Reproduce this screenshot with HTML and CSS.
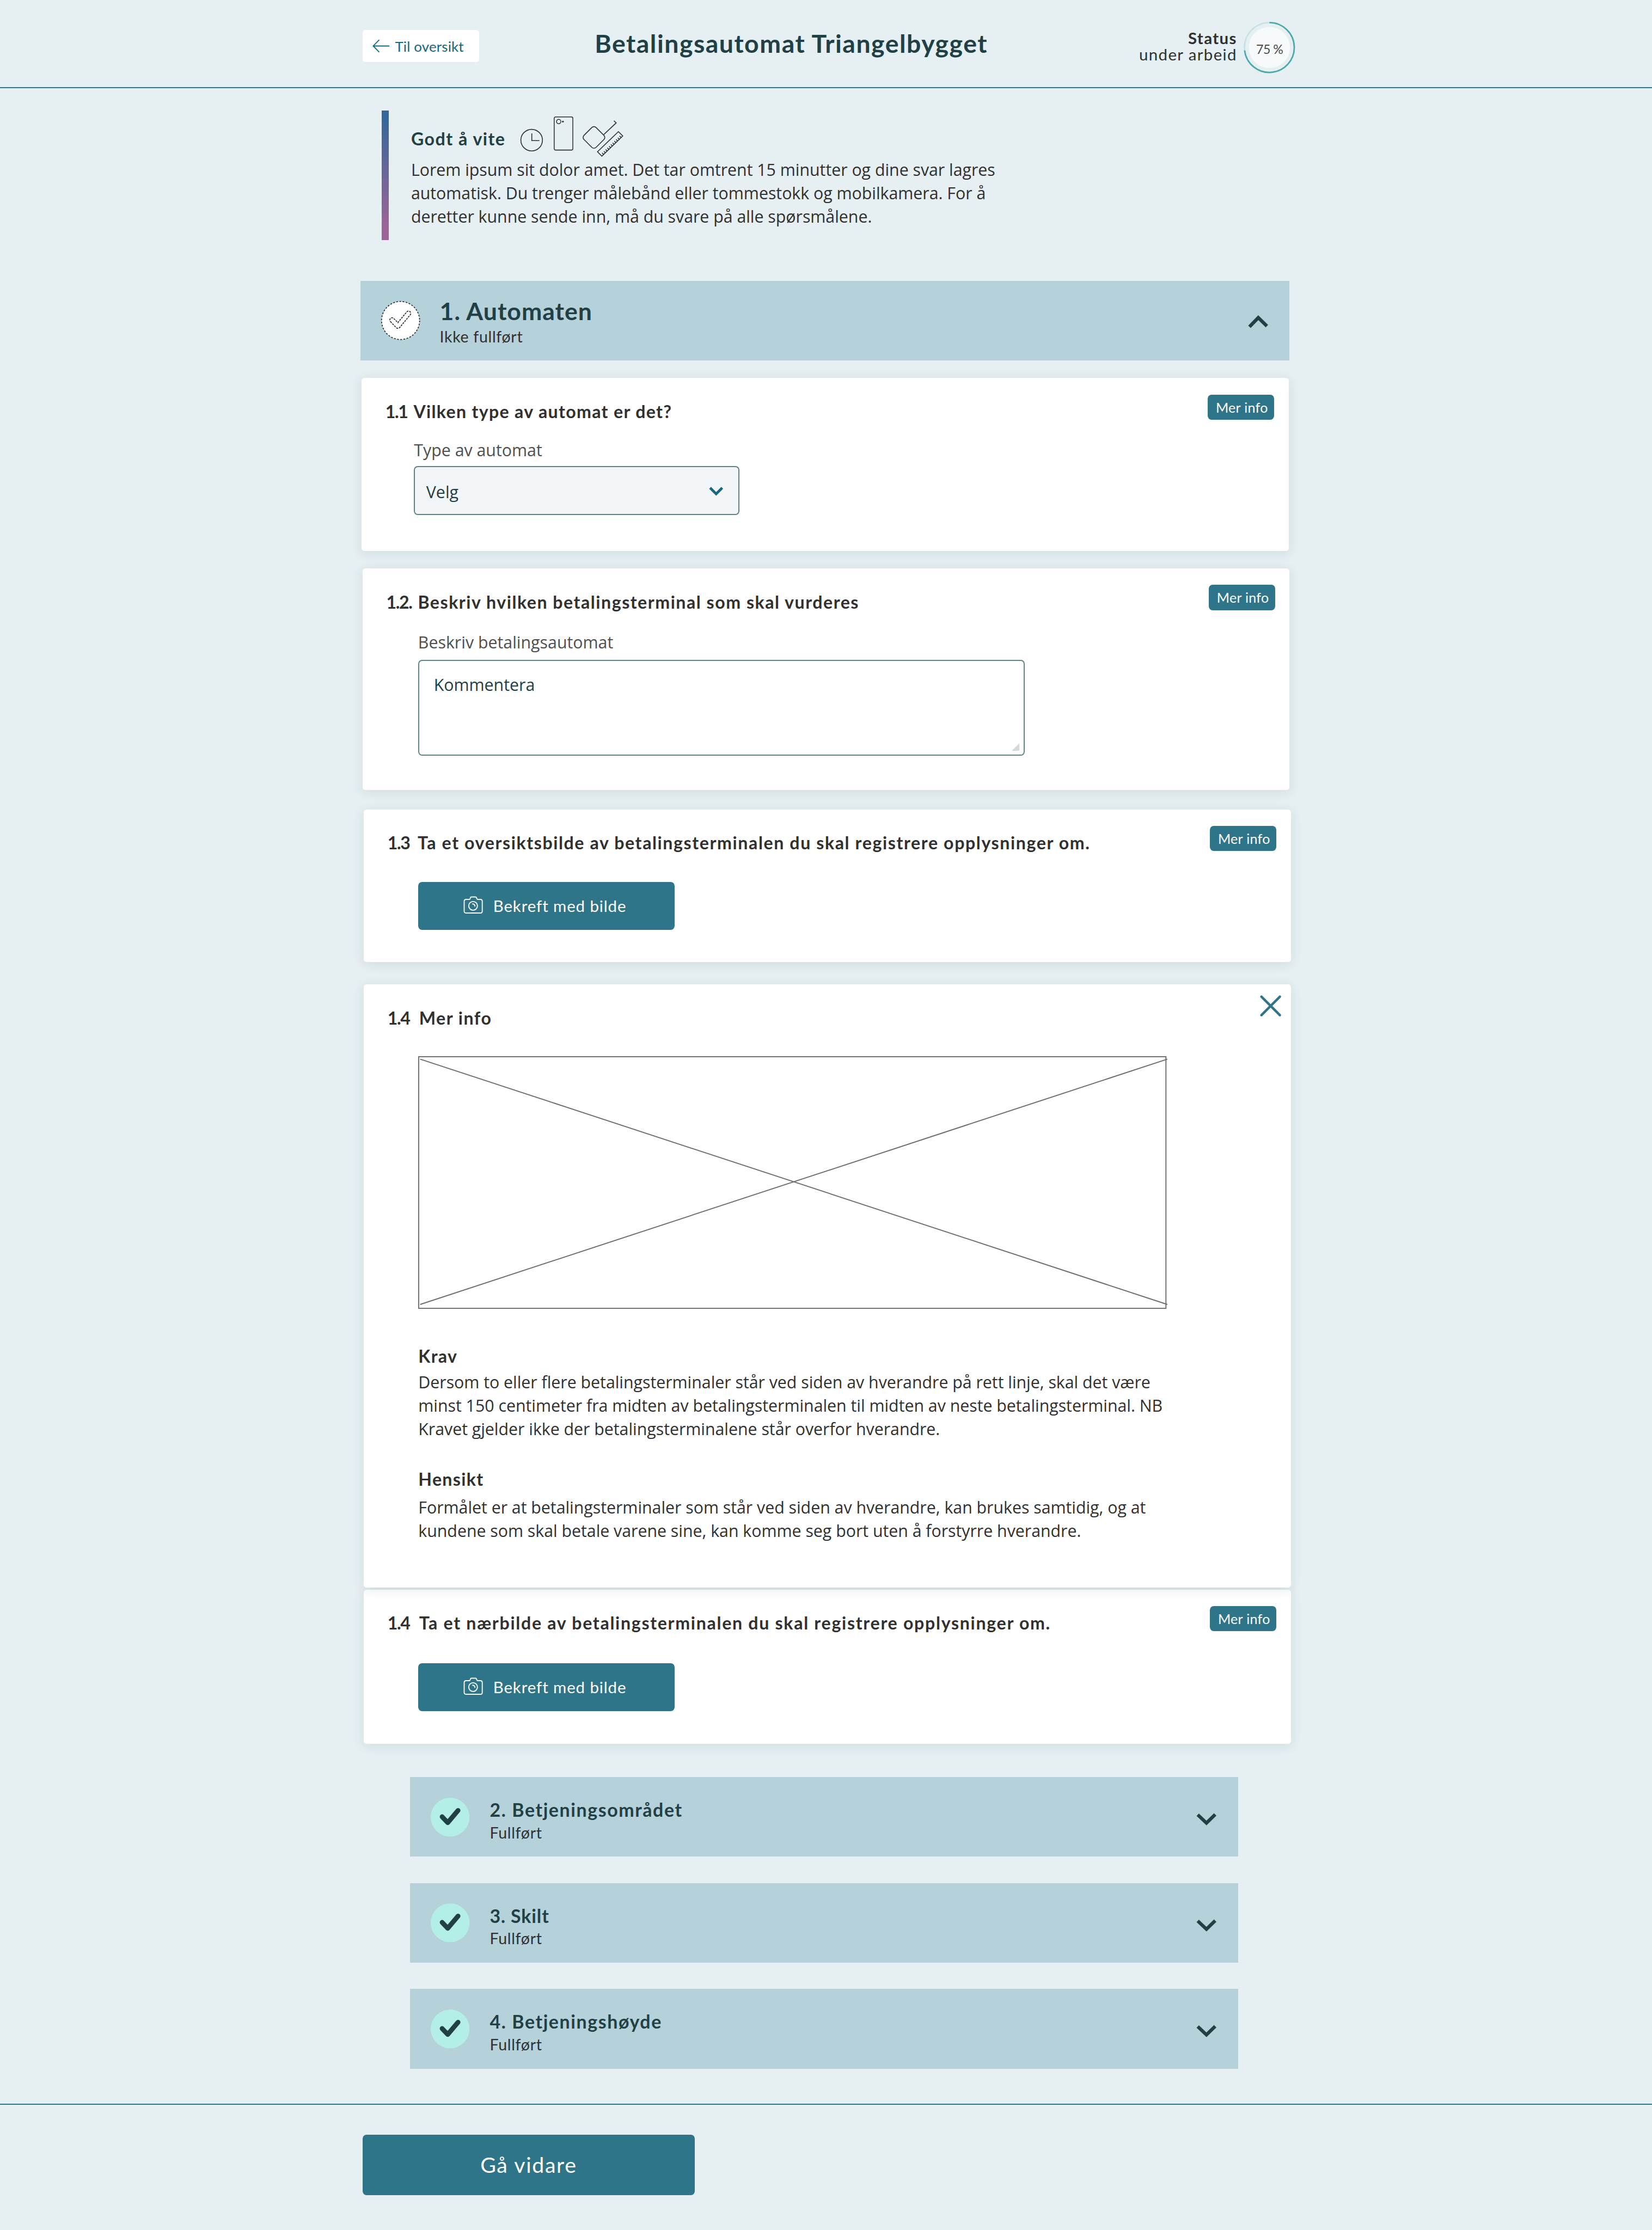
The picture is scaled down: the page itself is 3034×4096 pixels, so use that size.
FILE: index.html
```html
<!DOCTYPE html>
<html lang="no">
<head>
<meta charset="utf-8">
<title>Betalingsautomat Triangelbygget</title>
<link rel="stylesheet" href="styles.css">
</head>
<body>
<svg class="defs" aria-hidden="true">
  <symbol id="camera" viewBox="0 0 41 37">
    <path d="M12.7 6.7C14.3 6.7 13.8 1.7 16.6 1.7H25C27.8 1.7 27.3 6.7 29 6.7H35Q38.9 6.7 38.9 10.7V30.7Q38.9 34.7 35 34.7H5.7Q1.7 34.7 1.7 30.7V10.7Q1.7 6.7 5.7 6.7Z" fill="none" stroke="#fff" stroke-width="2.1" stroke-linejoin="round"/>
    <circle cx="20" cy="20" r="9" fill="none" stroke="#fff" stroke-width="2.1"/>
    <path d="M19 16A5 5 0 0 1 23.7 20.8" fill="none" stroke="#fff" stroke-width="2.1" stroke-linecap="round"/>
  </symbol>
  <symbol id="done" viewBox="-40 -40 80 80">
    <circle r="40" fill="#b4efe7"/>
    <path d="M-16.5 -.8L-5 11.4L16.3 -13.8" fill="none" stroke="#214045" stroke-width="9.8" stroke-linecap="round" stroke-linejoin="round"/>
  </symbol>
  <symbol id="chevron" viewBox="0 0 42 28">
    <path d="M3 4.8L21 21.8L39 4.2" fill="none" stroke="#214045" stroke-width="7"/>
  </symbol>
</svg>

<header class="topbar">
  <a class="back">
    <svg class="back-arrow" viewBox="0 0 36 28"><path d="M35 14H2M14 1.2L1.6 14L14 26.8" fill="none" stroke="#0f6980" stroke-width="2"/></svg>
    <span>Til oversikt</span>
  </a>
  <h1 class="page-title">Betalingsautomat Triangelbygget</h1>
  <div class="status"><b>Status</b><span>under arbeid</span></div>
  <div class="progress">
    <svg class="progress-ring" viewBox="-53 -53 106 106">
      <circle r="51.3" fill="none" stroke="#c8e2e3" stroke-width="3"/>
      <path d="M0 -51.3A51.3 51.3 0 1 1 -51 6" fill="none" stroke="#4aa9ad" stroke-width="3"/>
      <circle r="42.4" fill="#f6fafb"/>
    </svg>
    <span class="progress-value">75 %</span>
  </div>
</header>

<main>
  <section class="notice">
    <div class="notice-bar"></div>
    <div class="notice-body">
      <div class="notice-head">
        <h2 class="notice-title">Godt å vite</h2>
        <svg class="icon-clock" viewBox="0 0 48 48" fill="none" stroke="#303030" stroke-width="1.8"><circle cx="24" cy="24" r="22.2"/><path d="M24.3 10V25H40"/></svg>
        <svg class="icon-phone" viewBox="0 0 42 72" fill="none" stroke="#303030" stroke-width="1.7"><rect x="2" y="2" width="38.4" height="68.2" rx="3"/><circle cx="11.3" cy="11.6" r="4.5"/><circle cx="20" cy="11.6" r="1.8" fill="#303030" stroke="none"/></svg>
        <svg class="icon-tape" viewBox="0 0 84 80" fill="none" stroke="#303030" stroke-width="1.8">
          <rect x="9.2" y="20" width="35" height="35" rx="6" transform="rotate(45 26.7 37.5)"/>
          <path d="M47 31.5L72.5 7.5L67.8 3.2"/>
          <path d="M77 25.5L86 34.5L43 76L34 67Z"/>
          <path d="M46.5 72.6L43.6 69.2M50.1 69.2L47.2 65.8M53.7 65.7L50.8 62.3M57.3 62.2L54.4 58.8M60.9 58.8L58 55.4M64.5 55.3L61.6 51.9M68.1 51.8L65.2 48.4M71.7 48.3L68.8 44.9M75.3 44.9L72.4 41.5M78.9 41.4L76 38M82.5 37.9L79.6 34.5"/>
        </svg>
      </div>
      <p class="text">Lorem ipsum sit dolor amet. Det tar omtrent 15 minutter og dine svar lagres<br>automatisk. Du trenger målebånd eller tommestokk og mobilkamera. For å<br>deretter kunne sende inn, må du svare på alle spørsmålene.</p>
    </div>
  </section>

  <section class="section-bar section-open">
    <svg class="section-icon" viewBox="-40 -40 80 80">
      <circle r="39.2" fill="#fff" stroke="#303030" stroke-width="1.9" stroke-dasharray="3.6 2.9"/>
      <path d="M-20.9 2.25L-8.9 14.75A4.7 4.7 0 0 0 -1.9 14.5L20.1 -12A4.7 4.7 0 0 0 12.9 -18L-5.6 4.4L-14.1 -4.25A4.7 4.7 0 0 0 -20.9 2.25Z" fill="none" stroke="#303030" stroke-width="1.9" stroke-dasharray="4 1.8"/>
    </svg>
    <div class="section-text"><h2 class="section-title">1. Automaten</h2><p class="section-state">Ikke fullført</p></div>
    <svg class="chevron chevron-up" viewBox="0 0 42 28"><path d="M3 23.8L21.2 5L39 22.4" fill="none" stroke="#214045" stroke-width="7"/></svg>
  </section>

  <section class="card card-type">
    <div class="card-head"><span class="num">1.1</span><h3 class="question">Vilken type av automat er det?</h3><button class="more">Mer info</button></div>
    <div class="card-body">
      <label class="label">Type av automat</label>
      <div class="select"><span>Velg</span><svg class="select-arrow" viewBox="0 0 32 22"><path d="M3.5 4.5L16 17L28.5 4.5" fill="none" stroke="#156880" stroke-width="5.4"/></svg></div>
    </div>
  </section>

  <section class="card card-describe">
    <div class="card-head"><span class="num">1.2.</span><h3 class="question">Beskriv hvilken betalingsterminal som skal vurderes</h3><button class="more">Mer info</button></div>
    <div class="card-body">
      <label class="label">Beskriv betalingsautomat</label>
      <div class="comment"><span>Kommentera</span><svg class="grip" viewBox="0 0 16 16"><path d="M16 0V13Q16 16 13 16H0Z" fill="#d3d9dc"/></svg></div>
    </div>
  </section>

  <section class="card card-overview">
    <div class="card-head"><span class="num">1.3</span><h3 class="question">Ta et oversiktsbilde av betalingsterminalen du skal registrere opplysninger om.</h3><button class="more">Mer info</button></div>
    <button class="photo"><svg class="camera"><use href="#camera"/></svg><span>Bekreft med bilde</span></button>
  </section>

  <section class="card card-info">
    <div class="card-head"><span class="num">1.4</span><h3 class="question">Mer info</h3><svg class="close" viewBox="0 0 44 44"><path d="M3 3L41 41M41 3L3 41" fill="none" stroke="#2e7589" stroke-width="5" stroke-linecap="round"/></svg></div>
    <div class="card-body">
      <svg class="placeholder" viewBox="0 0 1544 520"><rect x="1" y="1" width="1538" height="518" fill="none" stroke="#6e6e6e" stroke-width="2.2"/><path d="M4 6L1542 511M4 511L1542 6" fill="none" stroke="#6e6e6e" stroke-width="2.2"/></svg>
      <h4 class="info-title">Krav</h4>
      <p class="text">Dersom to eller flere betalingsterminaler står ved siden av hverandre på rett linje, skal det være<br>minst 150 centimeter fra midten av betalingsterminalen til midten av neste betalingsterminal. NB<br>Kravet gjelder ikke der betalingsterminalene står overfor hverandre.</p>
      <h4 class="info-title info-purpose">Hensikt</h4>
      <p class="text">Formålet er at betalingsterminaler som står ved siden av hverandre, kan brukes samtidig, og at<br>kundene som skal betale varene sine, kan komme seg bort uten å forstyrre hverandre.</p>
    </div>
  </section>

  <section class="card card-closeup">
    <div class="card-head"><span class="num">1.4</span><h3 class="question">Ta et nærbilde av betalingsterminalen du skal registrere opplysninger om.</h3><button class="more">Mer info</button></div>
    <button class="photo"><svg class="camera"><use href="#camera"/></svg><span>Bekreft med bilde</span></button>
  </section>

  <div class="sections">
    <section class="section-bar">
      <svg class="section-icon"><use href="#done"/></svg>
      <div class="section-text"><h2 class="section-title">2. Betjeningsområdet</h2><p class="section-state">Fullført</p></div>
      <svg class="chevron"><use href="#chevron"/></svg>
    </section>
    <section class="section-bar">
      <svg class="section-icon"><use href="#done"/></svg>
      <div class="section-text"><h2 class="section-title title-short">3. Skilt</h2><p class="section-state">Fullført</p></div>
      <svg class="chevron"><use href="#chevron"/></svg>
    </section>
    <section class="section-bar">
      <svg class="section-icon"><use href="#done"/></svg>
      <div class="section-text"><h2 class="section-title">4. Betjeningshøyde</h2><p class="section-state">Fullført</p></div>
      <svg class="chevron"><use href="#chevron"/></svg>
    </section>
  </div>
</main>

<footer class="bottom"><button class="next">Gå vidare</button></footer>
</body>
</html>
```
FILE: styles.css
```css
* { box-sizing: border-box; }
html { font-size: 8.9235px; }
body {
  margin: 0;
  width: 340rem;
  background: #e6eff1;
  color: #303030;
  font-family: Lato, sans-serif;
  font-size: 3.2rem;
}
h1, h2, h3, h4, p { margin: 0; font-weight: 700; }
p { font-weight: 400; }
button { border: 0; padding: 0; font-family: inherit; color: #fff; background: #2e7589; }
svg { display: block; flex: none; overflow: visible; }
.defs { display: none; }

/* Header */
.topbar {
  display: flex;
  align-items: flex-start;
  height: 18.2rem;
  padding: 0 73.4rem 0 74.6rem;
  border-bottom: 2px solid #2e7589;
}
.back {
  display: flex;
  align-items: center;
  width: 24rem;
  height: 6.6rem;
  margin-top: 6.2rem;
  padding: .2rem 0 0 2rem;
  gap: 1.1rem;
  border-radius: .6rem;
  background: #fff;
  color: #0f6980;
  font-size: 2.9rem;
  line-height: 4rem;
  letter-spacing: .02rem;
}
.back-arrow { width: 3.6rem; height: 2.8rem; margin-top: -.3rem; }
.page-title {
  margin: 5.98rem 0 0 23.8rem;
  color: #214045;
  font-size: 5.2rem;
  line-height: 6rem;
  letter-spacing: .17rem;
  white-space: nowrap;
}
.status {
  display: flex;
  flex-direction: column;
  margin: 6.13rem 1.4rem 0 auto;
  text-align: right;
  font-size: 3.3rem;
  line-height: 3.44rem;
  letter-spacing: .155rem;
}
.progress { display: grid; margin-top: 4.5rem; }
.progress-ring, .progress-value { grid-area: 1 / 1; }
.progress-ring { width: 10.6rem; height: 10.6rem; }
.progress-value {
  z-index: 1;
  place-self: center;
  margin-top: .6rem;
  color: #4a4a4a;
  font-size: 2.6rem;
  line-height: 3rem;
  letter-spacing: -.06rem;
}

/* Notice */
.notice { display: flex; height: 26.6rem; margin: 4.6rem 0 0 78.6rem; }
.notice-bar { width: 1.4rem; background: linear-gradient(#33679b 5%, #9e6498 90%); }
.notice-body { padding: 1.1rem 0 0 4.6rem; }
.notice-head { display: flex; align-items: flex-start; height: 8.7rem; }
.notice-title {
  width: 22.4rem;
  margin-top: 2.45rem;
  color: #214045;
  font-size: 3.6rem;
  line-height: 4.4rem;
  letter-spacing: .17rem;
}
.icon-clock { width: 4.8rem; height: 4.8rem; margin-top: 2.5rem; }
.icon-phone { width: 4.2rem; height: 7.2rem; margin-left: 2.1rem; }
.icon-tape { width: 8.4rem; height: 8rem; margin: .6rem 0 0 1.5rem; }
.text {
  font-family: "Open Sans", sans-serif;
  font-size: 3.4rem;
  line-height: 4.8rem;
  letter-spacing: -.003rem;
  white-space: nowrap;
}

/* Accordion bars */
.section-bar {
  display: flex;
  align-items: flex-start;
  height: 16.4rem;
  padding: 4.2rem 4.4rem 0 4.2rem;
  background: #b5d1da;
}
.section-icon { width: 8rem; height: 8rem; }
.section-text { margin: .42rem auto 0 4.2rem; }
.section-title {
  color: #214045;
  font-size: 3.8rem;
  line-height: 4.4rem;
  letter-spacing: .18rem;
}
.title-short { letter-spacing: .1rem; }
.section-state { margin-top: .45rem; line-height: 4rem; letter-spacing: .075rem; }
.chevron { width: 4.2rem; height: 2.8rem; margin-top: 3.1rem; }
.section-open { width: 191.2rem; margin: 8.4rem 0 0 74.2rem; }
.section-open .section-text { margin: -.7rem auto 0 4.1rem; }
.section-open .section-title { font-size: 5rem; line-height: 5.4rem; letter-spacing: .11rem; }
.section-open .section-state { margin-top: .6rem; }
.section-open .chevron-up { margin-top: 2.9rem; }
.sections { display: grid; gap: 5.4rem; width: 170.4rem; margin: 6.8rem 0 0 84.4rem; }

/* Question cards */
.card {
  position: relative;
  width: 190.8rem;
  border-radius: .6rem;
  background: #fff;
  box-shadow: 0 .4rem 2.4rem rgba(33, 64, 69, .1);
}
.card-head {
  display: flex;
  align-items: flex-start;
  padding: 3.4rem 3rem 0 4.9rem;
  height: 12.4rem;
}
.num { width: 6.5rem; }
.num, .question {
  margin-top: 1.28rem;
  font-size: 3.6rem;
  font-weight: 700;
  line-height: 4.4rem;
  letter-spacing: .17rem;
  white-space: nowrap;
}
.num { letter-spacing: -.15rem; }
.more {
  width: 13.6rem;
  height: 5.2rem;
  margin-left: auto;
  padding-left: .4rem;
  border-radius: .8rem;
  font-size: 2.8rem;
  line-height: 4.5rem;
  letter-spacing: .035rem;
}
.label {
  display: block;
  color: #4f4f4f;
  font-family: "Open Sans", sans-serif;
  font-size: 3.4rem;
  line-height: 4.4rem;
}
.select {
  display: flex;
  align-items: center;
  justify-content: space-between;
  width: 67rem;
  height: 10rem;
  margin-top: 1.15rem;
  padding: .5rem 3rem 0 2.3rem;
  border: 2px solid #5f8085;
  border-radius: .8rem;
  background: #f2f6f8;
  color: #214045;
  font-family: "Open Sans", sans-serif;
  font-size: 3.4rem;
}
.select-arrow { width: 3.2rem; height: 2.2rem; margin-top: -.4rem; }
.comment {
  display: flex;
  justify-content: space-between;
  width: 124.8rem;
  height: 19.8rem;
  margin-top: 1.4rem;
  padding: 2.75rem .8rem .8rem 3rem;
  border: 2px solid #5f8585;
  border-radius: .8rem;
  color: #214045;
  font-family: "Open Sans", sans-serif;
  font-size: 3.4rem;
  line-height: 4.4rem;
}
.grip { width: 1.6rem; height: 1.6rem; align-self: flex-end; }
.photo {
  display: flex;
  align-items: flex-start;
  width: 52.8rem;
  height: 9.8rem;
  margin-left: 11.25rem;
  padding: 2.9rem 0 0 9.3rem;
  gap: 2rem;
  border-radius: .8rem;
  font-size: 3.3rem;
  line-height: 4rem;
  letter-spacing: .1rem;
}
.photo span { margin-top: -.02rem; }
.camera { width: 4.1rem; height: 3.7rem; }

.card-type { height: 35.6rem; margin: 3.6rem 0 0 74.4rem; }
.card-type .num { width: 5.8rem; }
.card-type .question { letter-spacing: .148rem; }
.card-type .card-body { padding: .23rem 0 0 10.8rem; }

.card-describe { height: 45.6rem; margin: 3.6rem 0 0 74.6rem; }
.card-describe .card-body { padding: .6rem 0 0 11.45rem; }

.card-overview { height: 31.4rem; margin: 4rem 0 0 74.85rem; }
.card-overview .num { width: 6.2rem; }
.card-overview .question { letter-spacing: .179rem; }
.card-overview .photo { margin-top: 2.6rem; }

.card-info { z-index: 1; height: 124.2rem; margin: 4.6rem 0 0 74.85rem; }
.card-info .card-head { padding-right: 1.9rem; }
.card-info .card-body { padding: 2.4rem 0 0 11.25rem; }
.close { width: 4.4rem; height: 4.4rem; margin: -1.1rem 0 0 auto; }
.placeholder { width: 154.4rem; height: 52rem; }
.info-title {
  margin: 7.5rem 0 .92rem;
  font-size: 3.6rem;
  line-height: 4.4rem;
  letter-spacing: .15rem;
}
.info-purpose { margin: 5.6rem 0 1.4rem; }

.card-closeup { height: 31.8rem; margin: .4rem 0 0 74.85rem; }
.card-closeup .question { letter-spacing: .19rem; }
.card-closeup .photo { margin-top: 2.8rem; }

/* Footer */
.bottom { height: 26rem; margin-top: 7.2rem; padding: 6.2rem 0 0 74.6rem; border-top: 2px solid #2e7589; }
.next {
  display: block;
  width: 68.4rem;
  height: 12.4rem;
  border-radius: .8rem;
  font-size: 4.4rem;
  line-height: 12.2rem;
  letter-spacing: .185rem;
}
```
